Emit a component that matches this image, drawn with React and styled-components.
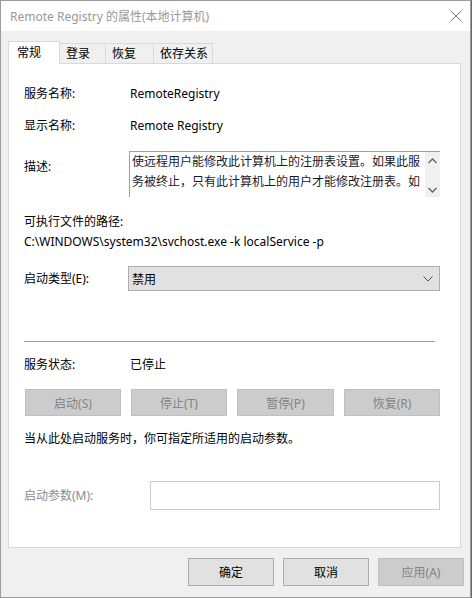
import React from 'react'
import styled, { createGlobalStyle } from 'styled-components'

const GlobalStyle = createGlobalStyle`
    html, body {
        margin: 0;
        padding: 0;
        background: #6b6b6b;
    }
    * {
        box-sizing: border-box;
    }
`

const Window = styled.div`
    width: 471px;
    height: 598px;
    border: 1px solid #9c9c9c;
    background: #f0f0f0;
    display: flex;
    flex-direction: column;
    font-family: "Noto Sans", "Noto Sans CJK SC", sans-serif;
    font-size: 12px;
    color: #000;
`

const TitleBar = styled.div`
    height: 30px;
    background: #fff;
    display: flex;
    align-items: center;
    justify-content: space-between;
    padding: 0 8px 0 9px;
    color: #999;
    font-size: 12px;
`

const Body = styled.div`
    padding: 10px 0 0 7px;
`

const TabStrip = styled.div`
    display: flex;
    align-items: flex-end;
    height: 23px;
    margin-bottom: -1px;
    position: relative;
    z-index: 1;
`

const Tab = styled.div`
    width: ${p => p.w}px;
    height: ${p => (p.active ? 23 : 20)}px;
    margin-bottom: ${p => (p.active ? 0 : 1)}px;
    padding-left: ${p => (p.active ? 8 : 6)}px;
    background: ${p => (p.active ? '#fff' : '#f0f0f0')};
    border: 1px solid #d9d9d9;
    border-bottom: none;
    border-left: ${p => (p.active || p.first ? '1px solid #d9d9d9' : 'none')};
    display: flex;
    align-items: center;
    line-height: 1;
`

const Panel = styled.div`
    width: 453px;
    height: 485px;
    background: #fff;
    border: 1px solid #d9d9d9;
    padding: 0 20px 0 15px;
    display: flex;
    flex-direction: column;
`

const Row = styled.div`
    display: grid;
    grid-template-columns: ${p => p.col || 104}px 1fr;
    align-items: ${p => p.align || 'center'};
    margin-top: ${p => p.top}px;
    min-height: 20px;
`

const Label = styled.div`
    line-height: 20px;
    color: ${p => (p.disabled ? '#8c8c8c' : '#000')};
    margin-top: ${p => p.offset || 0}px;
`

const Value = styled.div`
    line-height: 20px;
    padding-left: 2px;
`

const Line = styled.div`
    line-height: 20px;
    margin-top: ${p => p.top || 0}px;
`

const DescBox = styled.div`
    height: 46px;
    margin-left: 1px;
    border-top: 1px solid #a0a0a0;
    border-left: 1px solid #a0a0a0;
    display: flex;
`

const DescText = styled.div`
    flex: 1;
    height: 40px;
    overflow: hidden;
    padding: 0 2px;
    line-height: 20px;
    color: #1a1a2a;
`

const ScrollBar = styled.div`
    width: 15px;
    background: #f0f0f0;
    display: flex;
    flex-direction: column;
    justify-content: space-between;
    align-items: center;
    padding: 6px 0 4px;
`

const Select = styled.div`
    height: 25px;
    background: #e1e1e1;
    border: 1px solid #adadad;
    display: flex;
    align-items: center;
    justify-content: space-between;
    padding: 0 6px 0 3px;
`

const Separator = styled.div`
    height: 1px;
    background: #a0a0a0;
    margin: 50px 5px 0 0;
`

const ButtonRow = styled.div`
    display: flex;
    justify-content: space-between;
    margin: 14px 0 0 1px;
`

const Button = styled.div`
    width: ${p => p.w}px;
    height: ${p => p.h}px;
    display: flex;
    align-items: center;
    justify-content: center;
    background: ${p => (p.disabled ? '#cccccc' : '#e1e1e1')};
    border: 1px solid ${p => (p.disabled ? '#bfbfbf' : '#adadad')};
    color: ${p => (p.disabled ? '#838383' : '#000')};
`

const TextInput = styled.div`
    height: 29px;
    border: 1px solid #cccccc;
    background: #fff;
`

const Footer = styled.div`
    display: flex;
    justify-content: flex-end;
    gap: 9px;
    margin-top: 10px;
    padding-right: 6px;
`

const Chevron = ({ up }) => (
    <svg width="9" height="6" viewBox="0 0 9 6">
        <path
            d={up ? 'M0.5 5 L4.5 1 L8.5 5' : 'M0.5 1 L4.5 5 L8.5 1'}
            fill="none"
            stroke="#606060"
            strokeWidth="1.3"
        />
    </svg>
)

const tabs = [
    { name: '常规', w: 52 },
    { name: '登录', w: 46 },
    { name: '恢复', w: 48 },
    { name: '依存关系', w: 59 },
]

// only the part visible in the scrolled textarea
const desc = '使远程用户能修改此计算机上的注册表设置。如果此服务被终止，只有此计算机上的用户才能修改注册表。如'

const App = () => {
    return (
        <Window>
            <GlobalStyle />
            <TitleBar>
                <span>Remote Registry 的属性(本地计算机)</span>
                <svg width="12" height="12" viewBox="0 0 12 12">
                    <path d="M0.5 0.5 L11.5 11.5 M11.5 0.5 L0.5 11.5" stroke="#7a7a7a" strokeWidth="1" />
                </svg>
            </TitleBar>

            <Body>
                <TabStrip>
                    {tabs.map((t, i) => (
                        <Tab key={t.name} w={t.w} active={i === 0} first={i === 0}>
                            {t.name}
                        </Tab>
                    ))}
                </TabStrip>

                <Panel>
                    <Row top={20}>
                        <Label>服务名称:</Label>
                        <Value>RemoteRegistry</Value>
                    </Row>
                    <Row top={12}>
                        <Label>显示名称:</Label>
                        <Value>Remote Registry</Value>
                    </Row>
                    <Row top={15} align="start">
                        <Label offset={6}>描述:</Label>
                        <DescBox>
                            <DescText>{desc}</DescText>
                            <ScrollBar>
                                <Chevron up />
                                <Chevron />
                            </ScrollBar>
                        </DescBox>
                    </Row>

                    <Line top={15}>可执行文件的路径:</Line>
                    <Line>C:\WINDOWS\system32\svchost.exe -k localService -p</Line>

                    <Row top={14}>
                        <Label>启动类型(E):</Label>
                        <Select>
                            <span>禁用</span>
                            <svg width="10" height="6" viewBox="0 0 10 6">
                                <path d="M0.5 0.5 L5 5 L9.5 0.5" fill="none" stroke="#505050" strokeWidth="1" />
                            </svg>
                        </Select>
                    </Row>

                    <Separator />

                    <Row top={13}>
                        <Label>服务状态:</Label>
                        <Value>已停止</Value>
                    </Row>

                    <ButtonRow>
                        <Button w={96} h={27} disabled>启动(S)</Button>
                        <Button w={96} h={27} disabled>停止(T)</Button>
                        <Button w={97} h={27} disabled>暂停(P)</Button>
                        <Button w={96} h={27} disabled>恢复(R)</Button>
                    </ButtonRow>

                    <Line top={13}>当从此处启动服务时，你可指定所适用的启动参数。</Line>

                    <Row top={32} col={126}>
                        <Label disabled>启动参数(M):</Label>
                        <TextInput />
                    </Row>
                </Panel>

                <Footer>
                    <Button w={86} h={28}>确定</Button>
                    <Button w={86} h={28}>取消</Button>
                    <Button w={86} h={28} disabled>应用(A)</Button>
                </Footer>
            </Body>
        </Window>
    )
}

export default App
